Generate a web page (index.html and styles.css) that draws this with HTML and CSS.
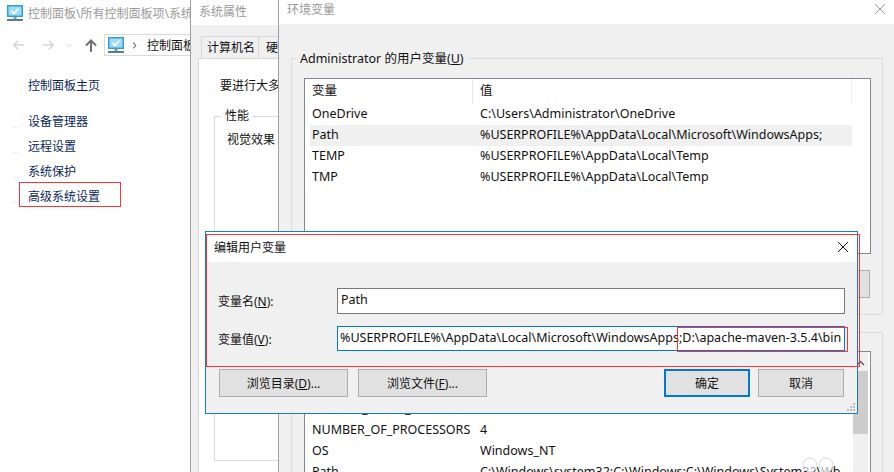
FILE: index.html
```html
<!DOCTYPE html>
<html lang="zh-CN">
<head>
<meta charset="utf-8">
<title>环境变量</title>
<link rel="stylesheet" href="styles.css">
</head>
<body>
<div class="desktop">

  <section class="win win-panel">
    <div class="panel-title">
      <svg class="mon" viewBox="0 0 16 16"><rect x="0" y="0" width="16" height="12" fill="#2f9fe0"/><rect x="1.5" y="1.5" width="13" height="9" fill="#9fdcf8"/><path d="M4.5 6l2.5 2.5 4.5-5" fill="none" stroke="#fff" stroke-width="1.8"/><rect x="6.5" y="12" width="3" height="2" fill="#8a9aa5"/><rect x="0" y="14" width="16" height="2" fill="#5f7a8c"/></svg>
      <span class="nowrap">控制面板\所有控制面板项\系统</span>
    </div>
    <div class="panel-nav">
      <svg class="nav-ic" viewBox="0 0 14 12"><path d="M13 6H2M6.5 1.5L2 6l4.5 4.5" fill="none" stroke="#d5d5d5" stroke-width="1.6"/></svg>
      <svg class="nav-ic fwd" viewBox="0 0 14 12"><path d="M1 6h11M7.5 1.5L12 6l-4.500 4.500" fill="none" stroke="#d5d5d5" stroke-width="1.6"/></svg>
      <svg class="nav-ch" viewBox="0 0 8 6"><path d="M1 1.500l3 3 3-3" fill="none" stroke="#d5d5d5" stroke-width="1.200"/></svg>
      <svg class="nav-up" viewBox="0 0 12 13"><path d="M6 13V2M1 6.500L6 1.500l5 5" fill="none" stroke="#707070" stroke-width="2"/></svg>
      <div class="addr">
        <svg class="mon" viewBox="0 0 16 16"><rect x="0" y="0" width="16" height="12" fill="#2f9fe0"/><rect x="1.500" y="1.500" width="13" height="9" fill="#9fdcf8"/><path d="M4.500 6l2.500 2.500 4.500-5" fill="none" stroke="#fff" stroke-width="1.800"/><rect x="6.500" y="12" width="3" height="2" fill="#8a9aa5"/><rect x="0" y="14" width="16" height="2" fill="#5f7a8c"/></svg>
        <svg class="addr-ch" viewBox="0 0 6 10"><path d="M1.500 1.500L4.500 5l-3 3.500" fill="none" stroke="#707070" stroke-width="1.300"/></svg>
        <span class="nowrap">控制面板</span>
      </div>
    </div>
    <nav class="side">
      <a class="home">控制面板主页</a>
      <a class="tick">设备管理器</a>
      <a class="tick">远程设置</a>
      <a class="tick">系统保护</a>
      <a class="tick">高级系统设置</a>
    </nav>
  </section>

  <section class="win win-props">
    <div class="title-bar props-title">系统属性</div>
    <div class="props-body">
      <div class="tabs"><span class="tab">计算机名</span><span class="tab tab2">硬件</span></div>
      <div class="props-page">
        <p class="props-note nowrap">要进行大多数</p>
        <div class="perf">
          <span class="perf-legend">性能</span>
          <p class="perf-text nowrap">视觉效果</p>
        </div>
      </div>
    </div>
  </section>

  <section class="win win-env">
    <div class="title-bar env-title"><span>环境变量</span>
      <svg class="x x-dim" viewBox="0 0 10 10"><path d="M0 0l10 10M10 0L0 10" stroke="#999" stroke-width="1" fill="none"/></svg>
    </div>
    <div class="env-body">
      <div class="group g1">
        <div class="legend">Administrator 的用户变量(<u>U</u>)</div>
        <div class="list l1">
          <div class="list-head"><span class="h1">变量</span><span class="h2">值</span></div>
          <div class="row"><span class="c1">OneDrive</span><span>C:\Users\Administrator\OneDrive</span></div>
          <div class="row on"><span class="c1">Path</span><span>%USERPROFILE%\AppData\Local\Microsoft\WindowsApps;</span></div>
          <div class="row"><span class="c1">TEMP</span><span>%USERPROFILE%\AppData\Local\Temp</span></div>
          <div class="row"><span class="c1">TMP</span><span>%USERPROFILE%\AppData\Local\Temp</span></div>
        </div>
        <div class="g1-actions"><button class="btn stub">删除</button></div>
      </div>
      <div class="group g2">
        <div class="list l2">
          <div class="l2-rows">
            <div class="row"><span class="c1">PYTHON_HOME_X</span><span></span></div>
            <div class="row"><span class="c1">NUMBER_OF_PROCESSORS</span><span>4</span></div>
            <div class="row"><span class="c1">OS</span><span>Windows_NT</span></div>
            <div class="row"><span class="c1">Path</span><span class="nowrap">C:\Windows\system32;C:\Windows;C:\Windows\System32\Wb</span></div>
          </div>
          <div class="sb">
            <svg class="sb-up" viewBox="0 0 9 6"><path d="M1 5l3.500-3.500L8 5" fill="none" stroke="#606060" stroke-width="1.500"/></svg>
            <div class="sb-thumb"></div>
          </div>
        </div>
      </div>
    </div>
  </section>

  <section class="win dialog">
    <div class="title-bar dlg-title"><span>编辑用户变量</span>
      <svg class="x" viewBox="0 0 10 10"><path d="M0 0l10 10M10 0L0 10" stroke="#111" stroke-width="1" fill="none"/></svg>
    </div>
    <div class="dlg-body">
      <div class="field f1"><label>变量名(<u>N</u>):</label><div class="input">Path</div></div>
      <div class="field f2"><label>变量值(<u>V</u>):</label><div class="input focus nowrap">%USERPROFILE%\AppData\Local\Microsoft\WindowsApps;D:\apache-maven-3.5.4\bin</div></div>
      <div class="actions">
        <button class="btn wide">浏览目录(<u>D</u>)...</button>
        <button class="btn wide">浏览文件(<u>F</u>)...</button>
        <span class="spacer"></span>
        <button class="btn mid primary">确定</button>
        <button class="btn mid">取消</button>
      </div>
      <svg class="grip" viewBox="0 0 9 9"><path fill="#bdbdbd" d="M6 0h2v2H6zM3 3h2v2H3zM6 3h2v2H6zM0 6h2v2H0zM3 6h2v2H3zM6 6h2v2H6z"/></svg>
    </div>
  </section>

  <div class="mark m-side"></div>
  <div class="mark m-dlg"></div>
  <div class="mark m-val"></div>
  <svg class="wm" viewBox="0 0 34 16"><circle cx="9" cy="8" r="7" fill="#fff" fill-opacity=".65" stroke="#d8d8d8"/><circle cx="25" cy="8" r="7" fill="#fff" fill-opacity=".65" stroke="#d8d8d8"/></svg>
</div>
</body>
</html>
```

FILE: styles.css
```css
* { box-sizing: border-box; }
html, body { margin: 0; padding: 0; }
body {
  font-family: "Noto Sans", "Noto Sans CJK SC", sans-serif;
  font-size: 12px;
  color: #111;
  background: #fff;
}
p { margin: 0; }
.nowrap { white-space: nowrap; }
.desktop { position: relative; width: 894px; height: 472px; overflow: hidden; }
.win { position: absolute; overflow: hidden; }
.mon { width: 16px; height: 16px; flex: none; }

/* control panel */
.win-panel { left: 0; top: 0; width: 191px; height: 472px; background: #fff; border-right: 1px solid #a0a0a0; }
.panel-title { display: flex; align-items: center; gap: 5px; height: 26px; padding-left: 7px; color: #9a9a9a; }
.panel-nav { display: flex; align-items: center; height: 24px; margin-top: 7px; padding-left: 12px; }
.nav-ic { width: 13px; height: 12px; flex: none; }
.fwd { margin-left: 17px; }
.nav-ch { width: 7px; height: 5px; margin-left: 11px; flex: none; }
.nav-up { width: 12px; height: 13px; margin-left: 12px; flex: none; }
.addr { display: flex; align-items: center; height: 22px; width: 90px; margin-left: 7px; padding-left: 3px; border: 1px solid #d9d9d9; border-right: 0; color: #111; }
.addr-ch { width: 5px; height: 9px; margin-left: 8px; margin-right: 10px; flex: none; }
.side { display: flex; flex-direction: column; padding: 16px 0 0 28px; }
.side a { display: block; height: 25px; line-height: 25px; color: #0b1f5c; position: relative; }
.side .home { margin-bottom: 11px; }
.tick::before { content: ""; position: absolute; left: -16px; top: 18px; width: 6px; height: 1px; background: #f0f0f0; }

/* system properties */
.title-bar { background: #fff; display: flex; align-items: center; }
.win-props { left: 191px; top: 0; width: 88px; height: 472px; background: #f0f0f0; border-right: 1px solid #a0a0a0; }
.props-title { height: 25px; padding-left: 8px; color: #999; white-space: nowrap; padding-bottom: 4px; }
.props-body { padding: 11px 0 0 7px; width: 200px; }
.tabs { display: flex; height: 22px; padding-left: 3px; }
.tab { border: 1px solid #d9d9d9; border-bottom: 0; padding: 0 5px; width: 58px; line-height: 21px; background: #f0f0f0; white-space: nowrap; font-size: 12px; }
.tab2 { border-left: 0; width: 60px; padding-left: 7px; }
.props-page { background: #fff; border-left: 1px solid #d9d9d9; border-top: 1px solid #d9d9d9; height: 420px; padding: 18px 0 0 15px; margin-top: 0; }
.props-note { padding-left: 6px; line-height: 18px; }
.perf { position: relative; margin-top: 21px; width: 120px; height: 345px; border: 1px solid #d9d9d9; padding: 14px 0 0 12px; }
.perf-legend { position: absolute; left: 6px; top: -9px; background: #fff; padding: 0 4px; line-height: 16px; }
.perf-text { line-height: 18px; }

/* environment window */
.win-env { left: 279px; top: 0; width: 615px; height: 472px; background: #f0f0f0; }
.env-title { height: 24px; padding: 0 9px 6px 8px; color: #999; justify-content: space-between; }
.x { width: 10px; height: 10px; flex: none; }
.env-body { padding: 34px 0 0 12px; }
.group { width: 592px; border: 1px solid #dcdcdc; padding: 0 12px 0 12px; position: relative; }
.legend { width: max-content; background: #f0f0f0; margin: -9px 0 0 -8px; padding: 0 4px; line-height: 17px; font-size: 12.500px; }
.g1 { height: 257px; }
.g2 { height: 200px; margin-top: 17px; padding-top: 18px; }
.list { width: 567px; background: #fff; border: 1px solid #828790; font-size: 12.500px; }
.l1 { height: 176px; margin-top: 11px; }
.list-head { display: flex; height: 25px; margin-left: 5px; width: 542px; line-height: 24px; border-right: 1px solid #eee; }
.h1 { width: 163px; padding-left: 2px; border-right: 1px solid #e5e5e5; }
.h2 { padding-left: 7px; }
.row { display: flex; height: 21px; line-height: 20px; margin-left: 5px; width: 542px; white-space: nowrap; }
.row.on { background: #f0f0f0; }
.c1 { width: 170px; flex: none; padding-left: 2px; }
.g1-actions { display: flex; justify-content: flex-end; margin-top: 16px; }
.btn { font: inherit; color: #111; background: #e1e1e1; border: 1px solid #adadad; height: 28px; padding: 0; }
.stub { width: 90px; color: transparent; }
.l2 { display: flex; height: 140px; border-bottom: 0; }
.l2-rows { padding-top: 47px; width: 548px; overflow: hidden; }
.sb { width: 15px; background: #f0f0f0; flex: none; }
.sb-up { display: block; width: 9px; height: 6px; margin: 8px auto 5px; }
.sb-thumb { height: 63px; background: #cdcdcd; }

/* edit dialog */
.dialog { left: 205px; top: 231px; width: 653px; height: 183px; background: #f0f0f0; border: 1px solid #1a7cc4; }
.dlg-title { height: 30px; padding: 0 9px 0 8px; justify-content: space-between; }
.dlg-body { position: relative; height: 151px; padding: 26px 13px 0 12px; }
.field { display: flex; align-items: center; }
.field label { width: 119px; flex: none; }
.input { width: 508px; height: 26px; flex: none; background: #fff; border: 1px solid #7a7a7a; line-height: 22px; padding-left: 3px; font-size: 12.500px; overflow: hidden; }
.f2 { margin-top: 12px; }
.focus { border-color: #0078d7; padding-left: 2px; height: 25px; }
.actions { display: flex; margin: 18px 0 0 1px; }
.wide { width: 129px; margin-right: 10px; }
.spacer { flex: 1; }
.mid { width: 86px; margin-left: 8px; }
.primary { border: 2px solid #0078d7; }
.grip { position: absolute; right: 1px; bottom: 1px; width: 9px; height: 9px; }

/* annotations */
.mark { position: absolute; border: 1px solid #f33; }
.m-side { left: 19px; top: 182px; width: 102px; height: 25px; }
.m-dlg { left: 206px; top: 234px; width: 654px; height: 133px; }
.m-val { left: 677px; top: 327px; width: 171px; height: 25px; }
.wm { position: absolute; left: 801px; top: 457px; width: 34px; height: 16px; }
```
